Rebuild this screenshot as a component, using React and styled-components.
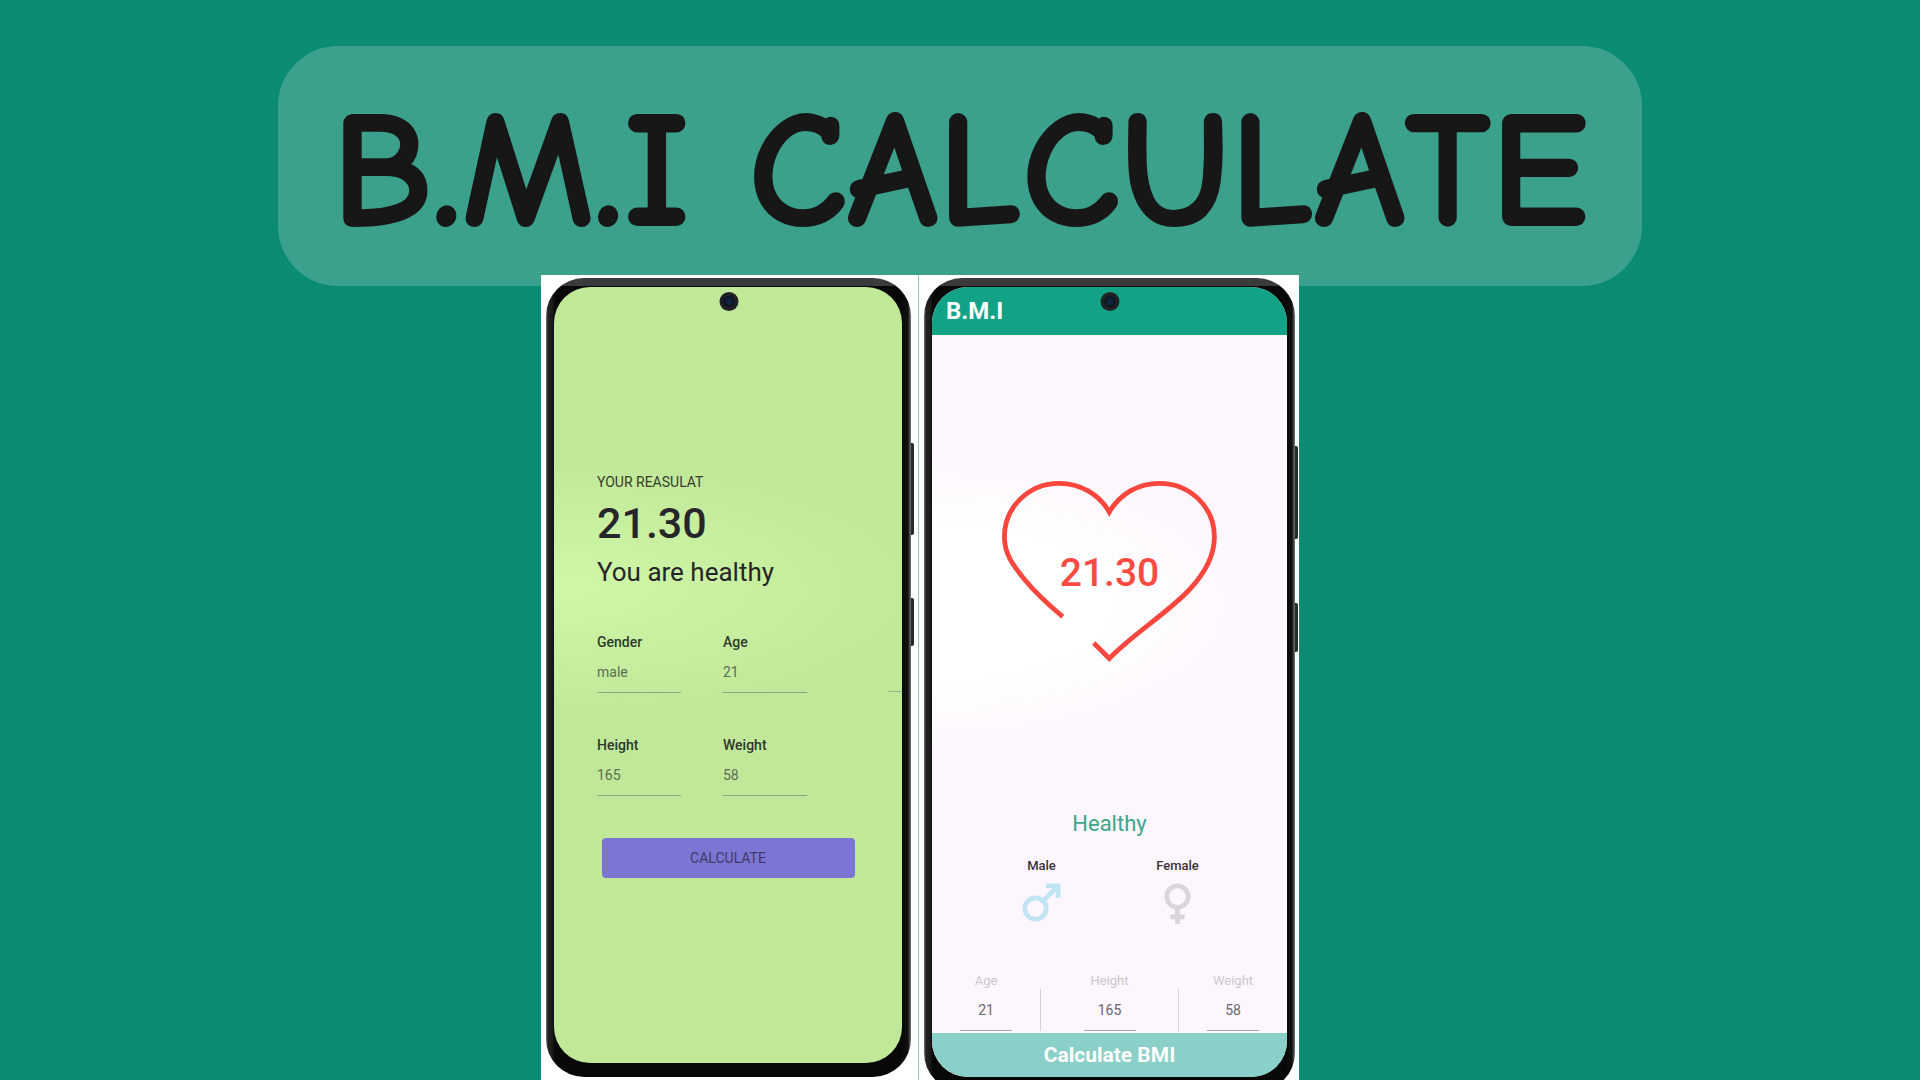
import React, { useState } from "react";
import styled, { createGlobalStyle, css } from "styled-components";

const GlobalStyle = createGlobalStyle`
  *, *::before, *::after { box-sizing: border-box; }
  body { margin: 0; background: #0b8b72; }
  input, button { font: inherit; }
`;

const Page = styled.main`
  display: flex;
  flex-direction: column;
  align-items: center;
  height: 100vh;
  padding-top: 46px;
  overflow: hidden;
  background: #0b8b72;
  font-family: Roboto, "Noto Sans", sans-serif;
  color: #25252a;
`;

const Banner = styled.header`
  display: flex;
  justify-content: center;
  align-items: center;
  flex-shrink: 0;
  width: 71%;
  min-height: 240px;
  padding-top: 12px;
  border-radius: 60px;
  background: #3ca18c;
`;

const Title = styled.h1`
  margin: 0;
  font-family: "Comic Sans MS", "Comic Neue", "Noto Sans", sans-serif;
  font-size: 164px;
  line-height: 200px;
  font-weight: 700;
  font-kerning: none;
  -webkit-text-stroke: 2px #171717;
  color: #171717;
  white-space: nowrap;
`;

const Showcase = styled.section`
  display: flex;
  flex: 1;
  align-self: stretch;
  justify-content: center;
  margin-top: -11px;
  padding-right: 80px;
`;

const Panel = styled.div`
  padding: 3px ${(p) => p.$right}px 0 5px;
  background: #fff;

  & + & {
    border-left: 1px solid #8fccc0;
  }
`;

const Frame = styled.div`
  position: relative;
  padding: 9px ${(p) => p.$bezel}px 14px 8px;
  border-radius: 38px;
  background:
    linear-gradient(#3a3a3a 0 8px, transparent 8px),
    linear-gradient(90deg, #777 0, #222 2px, #1c1c1c 6px, #080808 9px, #080808 calc(100% - 9px), #111 calc(100% - 3px), #777 100%);
`;

const SideKey = styled.span`
  position: absolute;
  left: 100%;
  top: ${(p) => p.$top}px;
  width: 3px;
  height: ${(p) => p.$size}px;
  border-radius: 0 2px 2px 0;
  background: #2a2829;
`;

const Camera = styled.span`
  position: absolute;
  top: 14px;
  left: 50%;
  width: 19px;
  height: 19px;
  border-radius: 50%;
  transform: translateX(-50%);
  background: radial-gradient(circle, #10243f 0 2px, #0a1322 5px, #1d1f22 6px, #25272a 100%);
`;

const screenTones = {
  green: css`
    background: radial-gradient(ellipse 380px 130px at 0 300px, #cff7a7, transparent) #c1e898;
  `,
  light: css`
    background: radial-gradient(ellipse 340px 150px at 0 316px, #fff 50%, transparent) #fdf6fe;
  `,
};

const Screen = styled.div`
  display: flex;
  flex-direction: column;
  width: ${(p) => p.$width}px;
  min-height: ${(p) => p.$height}px;
  border-radius: 36px;
  overflow: hidden;
  ${(p) => screenTones[p.$tone]}
`;

const ResultForm = styled.form`
  display: flex;
  flex-direction: column;
  padding: 185px 0 0 43px;
`;

const Caption = styled.p`
  margin: 0;
  font-size: 14px;
  line-height: 20px;
  color: #35402f;
`;

const Score = styled.output`
  margin: 5px 0 7px;
  font-size: 43px;
  line-height: 52px;
  font-weight: 500;
`;

const Verdict = styled.p`
  margin: 0 0 44px;
  font-size: 26px;
  line-height: 32px;
`;

const FieldRow = styled.div`
  display: flex;
  gap: 42px;
  margin-bottom: 42px;
`;

const Field = styled.div`
  display: flex;
  flex-direction: column;
  width: 84px;
`;

const FieldLabel = styled.label`
  font-size: 14px;
  line-height: 20px;
  font-weight: 500;
  color: #30392b;
`;

const FieldInput = styled.input`
  width: 100%;
  height: 41px;
  padding: 0;
  border: 0;
  border-bottom: 1px solid #8fa483;
  border-radius: 0;
  outline: 0;
  background: transparent;
  font-size: 14px;
  color: #5d6b55;
`;

const HiddenField = styled.span`
  align-self: flex-end;
  width: 14px;
  margin-left: auto;
  margin-bottom: 1px;
  border-bottom: 1px solid #9cb587;
`;

const CalculateButton = styled.button`
  align-self: center;
  width: 253px;
  height: 40px;
  margin-right: 43px;
  padding: 0;
  border: 0;
  border-radius: 4px;
  background: #7b76d4;
  font-size: 14px;
  color: #3f3a68;
`;

const AppBar = styled.header`
  height: 48px;
  padding-left: 14px;
  background: #12a285;
  font-size: 24px;
  line-height: 48px;
  font-weight: 700;
  color: #fff;
`;

const Gauge = styled.div`
  display: grid;
  place-items: center;
  margin: 145px 0 148px;

  > * {
    grid-area: 1 / 1;
  }
`;

const GaugeValue = styled.output`
  padding-top: 4px;
  font-size: 39px;
  line-height: 48px;
  font-weight: 500;
  color: #fb4b42;
`;

const Status = styled.p`
  margin: 0 0 19px;
  font-size: 22px;
  line-height: 28px;
  text-align: center;
  color: #3ba88b;
`;

const GenderGroup = styled.div`
  display: flex;
  justify-content: center;
  gap: 26px;
`;

const GenderOption = styled.label`
  display: flex;
  flex-direction: column;
  align-items: center;
  width: 110px;
  font-size: 13px;
  line-height: 17px;
  font-weight: 500;
  color: #38343b;
  cursor: pointer;
`;

const GenderRadio = styled.input`
  position: absolute;
  opacity: 0;
  pointer-events: none;
`;

const GenderIcon = styled.svg`
  width: 57px;
  height: 57px;
  fill: ${(p) => (p.$active ? "#c0e4f3" : "#d8d6d8")};
`;

const Stats = styled.div`
  display: grid;
  grid-template-columns: 108px 1fr 108px;
  margin-top: 42px;
`;

const Stat = styled.div`
  display: flex;
  flex-direction: column;
  align-items: center;
`;

const StatLabel = styled.label`
  font-size: 13px;
  line-height: 16px;
  color: #cbc7ce;
`;

const StatCell = styled.div`
  display: flex;
  justify-content: center;
  align-self: stretch;

  ${Stat}:nth-child(2) & {
    border: solid #d8d3da;
    border-width: 0 1px;
  }
`;

const StatInput = styled(FieldInput)`
  width: 52px;
  height: 42px;
  border-bottom-color: #aaa5ac;
  text-align: center;
  color: #69656c;
`;

const BottomButton = styled.button`
  height: 44px;
  margin-top: auto;
  padding: 0;
  border: 0;
  background: #8ad0c8;
  font-size: 21px;
  line-height: 28px;
  font-weight: 700;
  color: #fff;
`;

const MALE_PATH =
  "M9.5,11c1.93,0,3.5,1.57,3.5,3.5S11.43,18,9.5,18S6,16.43,6,14.5S7.57,11,9.5,11z M9.5,9C6.46,9,4,11.46,4,14.5S6.46,20,9.5,20s5.5-2.46,5.5-5.5c0-1.16-0.36-2.23-0.97-3.12L18,7.42V10h2V4h-6v2h2.58l-3.97,3.97C11.73,9.36,10.66,9,9.5,9z M15.5,5L19,8.500V5z";
const FEMALE_PATH =
  "M17.5,9.5C17.5,6.46,15.04,4,12,4S6.5,6.46,6.5,9.5c0,2.7,1.94,4.93,4.5,5.4V17H9v2h2v2h2v-2h2v-2h-2v-2.1C15.56,14.43,17.5,12.2,17.5,9.5z M8.5,9.5C8.5,7.57,10.07,6,12,6s3.5,1.57,3.5,3.5S13.93,13,12,13S8.5,11.43,8.5,9.5z";

function Phone({ right, bezel, width, height, tone, keys, children }) {
  return (
    <Panel $right={right}>
      <Frame $bezel={bezel}>
        <Screen $width={width} $height={height} $tone={tone}>
          {children}
        </Screen>
        <Camera />
        {keys.map(([top, size]) => (
          <SideKey key={top} $top={top} $size={size} />
        ))}
      </Frame>
    </Panel>
  );
}

function TextField({ id, label, value }) {
  return (
    <Field>
      <FieldLabel htmlFor={id}>{label}</FieldLabel>
      <FieldInput id={id} defaultValue={value} />
    </Field>
  );
}

function StatField({ id, label, value }) {
  return (
    <Stat>
      <StatLabel htmlFor={id}>{label}</StatLabel>
      <StatCell>
        <StatInput id={id} defaultValue={value} />
      </StatCell>
    </Stat>
  );
}

function Heart() {
  return (
    <svg width="215" height="182" viewBox="0 0 215 182" fill="none" stroke="#f9473d" strokeWidth="4.8" aria-hidden="true">
      <path d="M60.7 136.7C48 126 34 113.500 23 100C11 85.500 2.400 74 2.400 57C2.400 27 27 3.300 57 3.300C78 3.300 97 14 107.300 32C118 14 136 3.300 157.300 3.300C188 3.300 212.400 27 212.400 57C212.400 76 201 95 188 109C167 132 132 153 107.300 178.500L91.700 163" />
    </svg>
  );
}

export default function App() {
  const [gender, setGender] = useState("Male");
  const genders = [
    ["Male", MALE_PATH],
    ["Female", FEMALE_PATH],
  ];

  return (
    <>
      <GlobalStyle />
      <Page>
        <Banner>
          <Title>B.M.I CALCULATE</Title>
        </Banner>
        <Showcase>
          <Phone right={7} bezel={9} width={348} height={776} tone="green" keys={[[165, 92], [320, 48]]}>
            <ResultForm onSubmit={(e) => e.preventDefault()}>
              <Caption>YOUR REASULAT</Caption>
              <Score>21.30</Score>
              <Verdict>You are healthy</Verdict>
              <FieldRow>
                <TextField id="form-gender" label="Gender" value="male" />
                <TextField id="form-age" label="Age" value="21" />
                <HiddenField />
              </FieldRow>
              <FieldRow>
                <TextField id="form-height" label="Height" value="165" />
                <TextField id="form-weight" label="Weight" value="58" />
              </FieldRow>
              <CalculateButton type="submit">CALCULATE</CalculateButton>
            </ResultForm>
          </Phone>
          <Phone right={4} bezel={8} width={355} height={790} tone="light" keys={[[168, 93], [325, 49]]}>
            <AppBar>B.M.I</AppBar>
            <Gauge>
              <Heart />
              <GaugeValue>21.30</GaugeValue>
            </Gauge>
            <Status>Healthy</Status>
            <GenderGroup>
              {genders.map(([name, path]) => (
                <GenderOption key={name}>
                  <GenderRadio
                    type="radio"
                    name="gender"
                    checked={gender === name}
                    onChange={() => setGender(name)}
                  />
                  {name}
                  <GenderIcon viewBox="0 0 24 24" $active={gender === name} aria-hidden="true">
                    <path d={path} />
                  </GenderIcon>
                </GenderOption>
              ))}
            </GenderGroup>
            <Stats>
              <StatField id="stat-age" label="Age" value="21" />
              <StatField id="stat-height" label="Height" value="165" />
              <StatField id="stat-weight" label="Weight" value="58" />
            </Stats>
            <BottomButton type="button">Calculate BMI</BottomButton>
          </Phone>
        </Showcase>
      </Page>
    </>
  );
}
